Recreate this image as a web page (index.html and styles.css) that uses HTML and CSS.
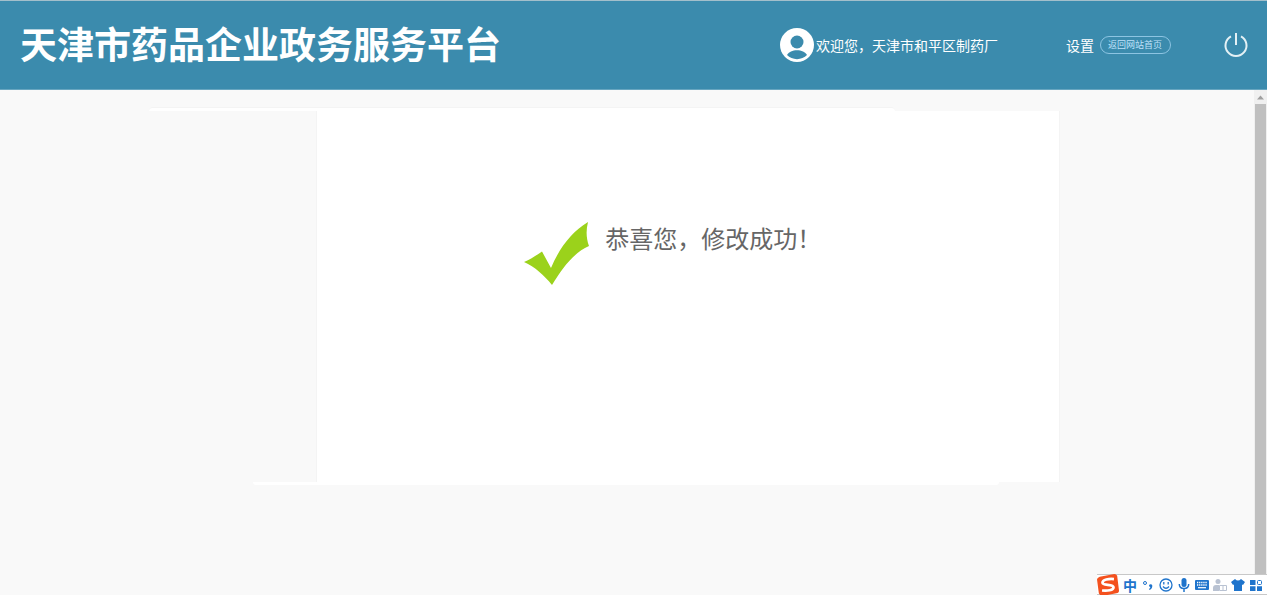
FILE: index.html
```html
<!DOCTYPE html>
<html lang="zh-CN">
<head>
<meta charset="utf-8">
<title>天津市药品企业政务服务平台</title>
<link rel="stylesheet" href="styles.css">
</head>
<body>
<header class="header">
  <h1 class="brand">天津市药品企业政务服务平台</h1>
  <div class="user">
    <svg class="avatar" viewBox="0 0 34 34" aria-hidden="true">
      <circle cx="17" cy="17" r="17" fill="#fff"/>
      <circle cx="17" cy="14" r="6.5" fill="#3b8bad"/>
      <path d="M7 27C10 20.500 24 20.500 27 27C22 32.500 12 32.500 7 27Z" fill="#3b8bad"/>
    </svg>
    <span>欢迎您，天津市和平区制药厂</span>
  </div>
  <nav class="links">
    <a class="settings" href="#">设置</a>
    <a class="home" href="#">返回网站首页</a>
  </nav>
  <button class="power" type="button" aria-label="退出">
    <svg viewBox="0 0 24 24" fill="none" stroke="#e4f1f5" stroke-width="2"><path d="M7 3.300A10.500 10.500 0 1 0 17 3.300M12 0V12"/></svg>
  </button>
</header>
<div class="body">
  <main class="content">
    <div class="edge edge-top"></div>
    <section class="card">
      <svg class="check" viewBox="0 0 65 64" aria-hidden="true"><path d="M0 40C7 37 13 33 18 29.500L27 46C35 27 47 10 64 0C62 8 62 16 65 24C49 31 38 47 28 63C20 53 11 45 0 40Z" fill="#9bd21b"/></svg>
      <p class="message">恭喜您，修改成功！</p>
    </section>
    <div class="edge edge-bottom"></div>
  </main>
  <div class="scrollbar" aria-hidden="true">
    <svg class="arrow" viewBox="0 0 13 13"><path d="M3 9L6.500 5L10 9Z" fill="#a0a0a0"/></svg>
    <div class="thumb"></div>
  </div>
</div>
<div class="ime">
  <svg class="sogou" viewBox="0 0 24 24" aria-hidden="true">
    <path d="M3 3L19 0Q21 0 22 2L24 18Q24 21 21 21L6 24Q3 24 2 21L0 6Q0 4 3 3Z" fill="#f4511e"/>
    <path d="M18.500 5.500C13 5 6 6 6 9.500C6 13 18 10.500 18 14.500C18 18 11 18.500 5.500 18" fill="none" stroke="#fff" stroke-width="3"/>
  </svg>
  <span class="lang">中</span>
  <svg class="tool" viewBox="0 0 14 14"><circle cx="4" cy="5" r="1.500" fill="none" stroke="#1f74cc"/><path d="M8 7.500A1.700 1.700 0 0 1 11.300 7.500Q11.500 10.500 8.500 12L8 11Q9.500 10 9.300 9Q8 8.800 8 7.500Z" fill="#1f74cc"/></svg>
  <svg class="tool" viewBox="0 0 14 14" fill="none" stroke="#1f74cc" stroke-width="1.300"><circle cx="7" cy="7" r="6"/><path d="M4.800 4V6.500M9.200 4V6.500M4 8.500Q7 12 10 8.500"/></svg>
  <svg class="tool" viewBox="0 0 14 14"><rect x="4.500" y="0" width="5" height="9" rx="2.500" fill="#1f74cc"/><path d="M2.300 6Q2.300 10.500 7 10.500Q11.700 10.500 11.700 6M7 10.500V14" fill="none" stroke="#1f74cc" stroke-width="1.500"/></svg>
  <svg class="tool" viewBox="0 0 14 14"><rect x="0" y="2" width="14" height="10" rx="1" fill="#1f74cc"/><path d="M2 4.500H12M2 7H12" stroke="#fff" stroke-width="1.300" stroke-dasharray="1.300 .8"/><path d="M3 9.700H11" stroke="#fff" stroke-width="1.200"/></svg>
  <svg class="tool" viewBox="0 0 14 14"><circle cx="5" cy="3.500" r="2.500" fill="#b9c2d2"/><path d="M0 13V10Q0 7 3 7H6V13Z" fill="#b9c2d2"/><path d="M6.500 7.500H13.500V12.500H6.500ZM10 7.500V12.500" fill="#fff" stroke="#b9c2d2"/></svg>
  <svg class="tool" viewBox="0 0 14 14"><path d="M4 1Q7 4 10 1L14 4L12 7L11 6.500V13H3V6.500L2 7L0 4Z" fill="#1f74cc"/></svg>
  <svg class="tool" viewBox="0 0 14 14"><path d="M1 2H6.500V7H1ZM1 8.300H6.500V13H1ZM8 8.300H13V13H8Z" fill="#1f74cc"/><rect x="8.500" y="2.500" width="4" height="4" rx="1" fill="none" stroke="#1f74cc"/></svg>
</div>
</body>
</html>
```
FILE: styles.css
```css
* { box-sizing: border-box; }
body {
  margin: 0;
  height: 100vh;
  display: flex;
  flex-direction: column;
  overflow: hidden;
  background: #f9f9f9;
  font-family: "Noto Sans CJK SC", sans-serif;
}
.header {
  flex: none;
  display: flex;
  align-items: center;
  height: 90px;
  padding: 0 19px 0 20px;
  background: #3b8bad;
  border-top: 1px solid #a3bfcb;
  border-bottom: 1px solid #68a6c0;
  color: #fff;
}
.brand {
  margin: 0 auto 0 0;
  padding-bottom: 4px;
  font-size: 37px;
  line-height: 40px;
  font-weight: 700;
  white-space: nowrap;
}
.user {
  display: flex;
  align-items: center;
  gap: 2px;
  margin-right: 68px;
  font-size: 14px;
  line-height: 20px;
  white-space: nowrap;
}
.avatar { width: 34px; height: 34px; }
.links {
  display: flex;
  align-items: center;
  gap: 6px;
  margin-right: 53px;
  white-space: nowrap;
}
.settings {
  color: #fff;
  font-size: 14px;
  line-height: 20px;
  text-decoration: none;
}
.home {
  padding: 0 8px 0 7px;
  border: 1px solid #8cc4e2;
  border-radius: 9px;
  color: #bfe2fb;
  font-size: 9px;
  line-height: 16px;
  text-decoration: none;
}
.power {
  width: 24px;
  height: 24px;
  padding: 0;
  border: 0;
  background: none;
}
.power svg { display: block; overflow: visible; }
.body {
  flex: 1;
  display: flex;
  min-height: 0;
}
.content {
  flex: 1;
  padding-top: 17px;
}
.edge {
  width: 59.5%;
  background: #fff;
}
.edge-top {
  height: 4px;
  margin-left: 11.9%;
  border-top: 1px solid #f4f4f4;
  border-radius: 4px 4px 0 0;
}
.edge-bottom {
  height: 3px;
  margin-left: 20.2%;
  border-radius: 0 0 4px 4px;
}
.card {
  display: flex;
  align-items: flex-start;
  justify-content: center;
  gap: 16px;
  width: 59.3%;
  min-height: 371px;
  margin-left: 25.2%;
  padding: 111px 30px 0 0;
  background: #fff;
  border: solid #f4f4f4;
  border-width: 0 1px;
}
.check { width: 65px; height: 64px; }
.message {
  margin: 0;
  color: #666;
  font-size: 24px;
  line-height: 32px;
  font-weight: 400;
}
.scrollbar {
  display: flex;
  flex-direction: column;
  width: 13px;
  background: #f0f0f0;
}
.arrow { width: 13px; height: 14px; }
.thumb {
  flex: 1;
  margin: 0 1px 20px;
  background: #c0c0c0;
}
.ime {
  position: absolute;
  right: 0;
  bottom: 0;
  display: flex;
  align-items: center;
  gap: 4px;
  height: 21px;
  padding-right: 4px;
  background: #fff;
  border: solid #c8c8c8;
  border-width: 1px 0;
}
.sogou { width: 22px; height: 24px; }
.lang {
  color: #1f74cc;
  font-size: 14px;
  line-height: 18px;
  font-weight: 700;
}
.tool { width: 14px; height: 14px; }
```
